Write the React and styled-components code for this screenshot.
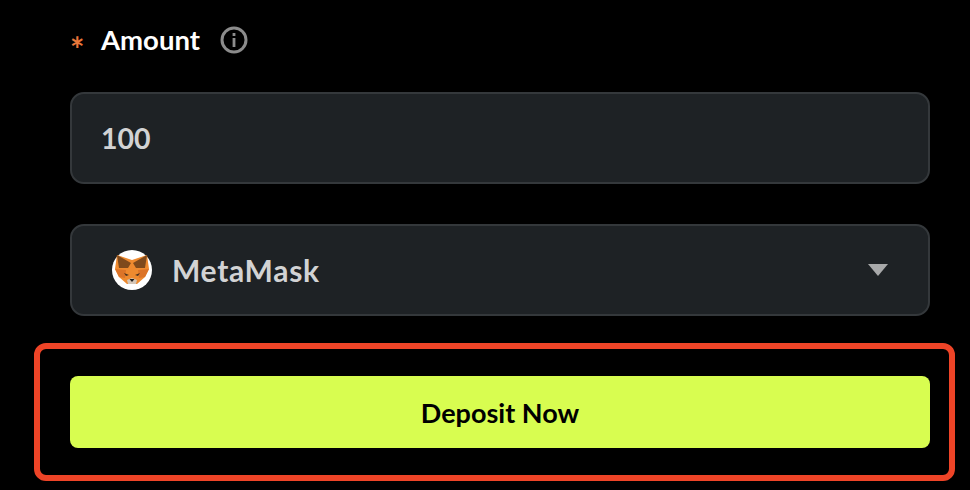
import React from "react";
import styled, { createGlobalStyle } from "styled-components";

const Global = createGlobalStyle`
  html, body { margin: 0; padding: 0; background: #000; }
  body { font-family: Lato, "Noto Sans", sans-serif; width: 970px; height: 490px; overflow: hidden; }
`;
const Form = styled.div`
  display: flex;
  flex-direction: column;
  width: 860px;
  padding: 20px 40px 0 70px;
`;
const LabelRow = styled.div`
  display: flex;
  align-items: center;
  height: 40px;
  margin-bottom: 32px;
`;
const Star = styled.span`
  color: #e8773a;
  font-size: 34px;
  font-weight: 700;
  line-height: 1;
  width: 31px;
  position: relative;
  top: 9px;
`;
const Label = styled.span`
  color: #fff;
  font-size: 27.5px;
  font-weight: 700;
  width: 119px;
  position: relative;
  top: -1px;
`;
const Field = styled.div`
  box-sizing: border-box;
  height: 92px;
  display: flex;
  align-items: center;
  background: #1e2225;
  border: 2px solid #34383b;
  border-radius: 14px;
  padding: ${(p) => (p.$select ? "0 40px 0 40px" : "0 29px")};
  margin-bottom: 40px;
  gap: 20px;
  color: #d2d3d4;
  font-size: ${(p) => (p.$select ? "30px" : "28.5px")};
  letter-spacing: ${(p) => (p.$select ? "0.7px" : "0")};
  font-weight: 700;
`;
const Value = styled.span`
  flex: 1;
`;
const Highlight = styled.div`
  display: flex;
  margin: -13px -25px 0 -36px;
  padding: 27px 19px 27px 30px;
  border: 6px solid #ee4427;
  border-radius: 12px;
`;
const Button = styled.button`
  flex: 1;
  height: 72px;
  border: 0;
  border-radius: 8px;
  background: #d8fd50;
  color: #000;
  font-family: inherit;
  font-size: 27px;
  font-weight: 700;
`;

const InfoIcon = () => (
  <svg width="28" height="28" viewBox="0 0 28 28" fill="none">
    <circle cx="14" cy="14" r="12" stroke="#8c8c8c" strokeWidth="3" />
    <rect x="12.6" y="12" width="2.8" height="9" fill="#8c8c8c" />
    <rect x="12.6" y="7" width="2.8" height="3" fill="#8c8c8c" />
  </svg>
);

const Fox = () => (
  <svg width="40" height="40" viewBox="0 0 40 40">
    <circle cx="20" cy="20" r="20" fill="#fff" />
    <polygon points="5,5 20,10 35,5 37,19 33,27 25,34 15,34 7,27 3,19" fill="#ee8a2f" />
    <polygon points="5,5 19,13 16,18 7,18" fill="#7f4a1c" />
    <polygon points="35,5 21,13 24,18 33,18" fill="#7f4a1c" />
    <polygon points="3,19 14,20 13,28 7,27" fill="#dc7428" />
    <polygon points="37,19 26,20 27,28 33,27" fill="#dc7428" />
    <polygon points="12,23 17,25 14,26" fill="#4a3220" />
    <polygon points="28,23 23,25 26,26" fill="#4a3220" />
    <polygon points="15,30 20,28 25,30 24,34 16,34" fill="#d4c6b8" />
    <polygon points="17.5,29 22.5,29 20,32" fill="#1d1d1d" />
  </svg>
);

const Caret = () => (
  <svg width="20" height="12" viewBox="0 0 20 12">
    <polygon points="0,0 20,0 10,12" fill="#a8a9aa" />
  </svg>
);

export default function App() {
  return (
    <>
      <Global />
      <Form>
        <LabelRow>
          <Star>*</Star>
          <Label>Amount</Label>
          <InfoIcon />
        </LabelRow>
        <Field>
          <Value>100</Value>
        </Field>
        <Field $select>
          <Fox />
          <Value>MetaMask</Value>
          <Caret />
        </Field>
        <Highlight>
          <Button>Deposit Now</Button>
        </Highlight>
      </Form>
    </>
  );
}
